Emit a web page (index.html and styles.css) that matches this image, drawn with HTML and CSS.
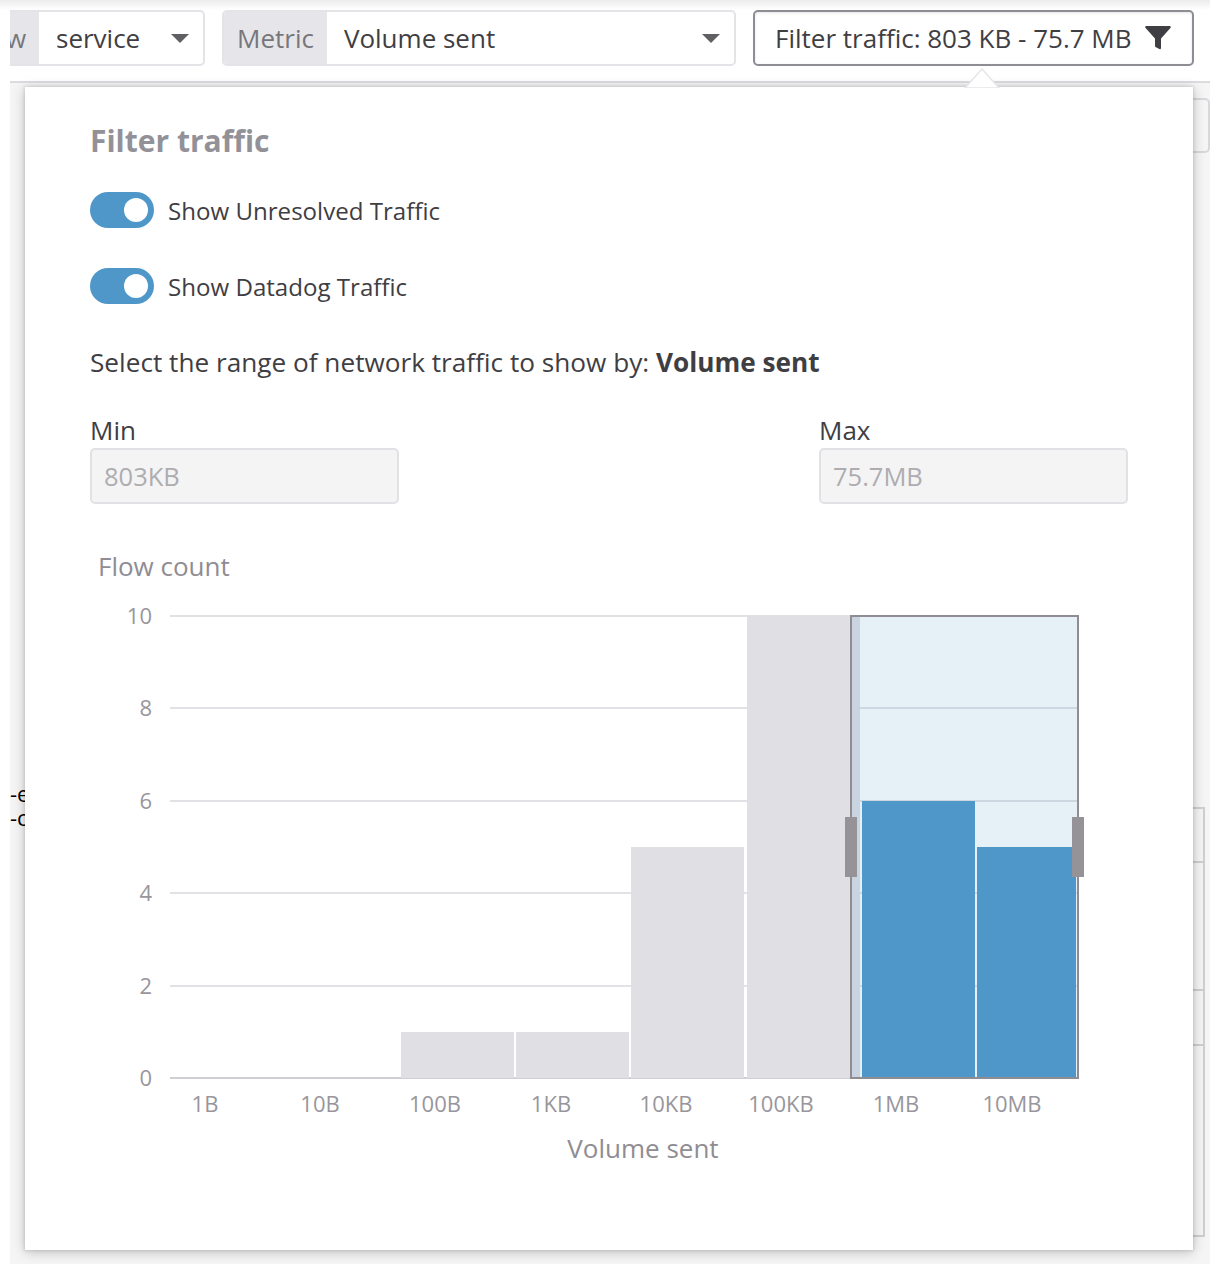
FILE: index.html
```html
<!DOCTYPE html>
<html lang="en">
	<head>
		<meta charset="utf-8">
		<title>Filter traffic</title>
		<link rel="stylesheet" href="styles.css">
	</head>
	<body>
		<div id="page-wrapper">
			<div class="toolbar">
				<div class="field field-groupby">
					<span class="field-label label-cut"><span class="label-cut-text">w</span></span>
					<span class="field-value">service</span>
					<span class="caret"></span>
				</div>
				<div class="field field-metric">
					<span class="field-label">Metric</span>
					<span class="field-value">Volume sent</span>
					<span class="caret"></span>
				</div>
				<div class="filter-button">
					<span>Filter traffic: 803 KB - 75.7 MB</span>
					<svg class="filter-icon" width="26" height="26" viewBox="0 0 26 26">
						<path d="M1.500 1h23c1.200 0 1.600 1.200 .9 2L16 13.500V23c0 .9-.9 1.500-1.700 1.100l-3.800-2.200c-.5-.3-.5-.7-.5-1.200v-7.200L.6 3C-.1 2.200 .3 1 1.500 1z"/>
					</svg>
				</div>
			</div>

			<div class="content">
				<div class="behind-log">
					<div>-e</div>
					<div>-c</div>
				</div>
				<div class="behind-side">
					<div class="side-box"></div>
					<div class="side-table">
						<div class="side-row row-a"></div>
						<div class="side-row row-b"></div>
						<div class="side-row row-c"></div>
						<div class="side-row row-d"></div>
					</div>
				</div>

				<div class="popover">
					<h2 class="popover-title">Filter traffic</h2>
					<div class="toggle-row">
						<span class="toggle"><span class="toggle-knob"></span></span>
						<span>Show Unresolved Traffic</span>
					</div>
					<div class="toggle-row">
						<span class="toggle"><span class="toggle-knob"></span></span>
						<span>Show Datadog Traffic</span>
					</div>
					<p class="range-text">Select the range of network traffic to show by: <b>Volume sent</b></p>
					<div class="range-inputs">
						<div class="range-field">
							<label>Min</label>
							<div class="range-input">803KB</div>
						</div>
						<div class="range-field">
							<label>Max</label>
							<div class="range-input">75.7MB</div>
						</div>
					</div>

					<!-- svg origin is at page x=90, y=540 -->
					<svg class="chart" width="1040" height="640" viewBox="0 0 1040 640">
						<text class="axis-title" x="8" y="36">Flow count</text>

						<g class="grid">
							<line x1="80" x2="988" y1="76" y2="76"/>
							<line x1="80" x2="988" y1="168" y2="168"/>
							<line x1="80" x2="988" y1="261" y2="261"/>
							<line x1="80" x2="988" y1="353" y2="353"/>
							<line x1="80" x2="988" y1="446" y2="446"/>
							<line class="grid-base" x1="80" x2="988" y1="538" y2="538"/>
						</g>

						<g class="ticks-y">
							<text x="62" y="84">10</text>
							<text x="62" y="176">8</text>
							<text x="62" y="269">6</text>
							<text x="62" y="361">4</text>
							<text x="62" y="454">2</text>
							<text x="62" y="546">0</text>
						</g>

						<g class="bars-off">
							<rect x="311" y="492" width="113" height="46"/>
							<rect x="426" y="492" width="113" height="46"/>
							<rect x="541" y="307" width="113" height="231"/>
							<rect x="657" y="76" width="113" height="462"/>
						</g>

						<rect class="selection-fill" x="761" y="76" width="227" height="462"/>
						<g class="bars-on">
							<rect x="772" y="261" width="113" height="277"/>
							<rect x="887" y="307" width="99" height="231"/>
						</g>
						<line class="selection-base" x1="761" x2="988" y1="538" y2="538"/>
						<rect class="selection-border" x="761" y="76" width="227" height="462"/>
						<rect class="handle" x="755" y="277" width="12" height="60"/>
						<rect class="handle" x="982" y="277" width="12" height="60"/>

						<g class="ticks-x">
							<text x="115" y="572">1B</text>
							<text x="230" y="572">10B</text>
							<text x="345" y="572">100B</text>
							<text x="461" y="572">1KB</text>
							<text x="576" y="572">10KB</text>
							<text x="691" y="572">100KB</text>
							<text x="806" y="572">1MB</text>
							<text x="922" y="572">10MB</text>
						</g>
						<text class="axis-title axis-title-x" x="553" y="618">Volume sent</text>
					</svg>
				</div>
				<svg class="popover-notch" width="36" height="20" viewBox="0 0 36 20">
					<polygon points="1,20 18,1 35,20"/>
				</svg>
			</div>
		</div>
	</body>
</html>
```

FILE: styles.css
```css
html, body {
	margin: 0;
	background: #ffffff;
}
body {
	font-family: "Open Sans", "Liberation Sans", sans-serif;
	color: #3f3e43;
	background: linear-gradient(#ececec, #ffffff 10px) no-repeat;
}
#page-wrapper {
	margin-left: 10px;
	height: 1264px;
	padding-top: 10px;
	box-sizing: border-box;
	display: flex;
	flex-direction: column;
	overflow: hidden;
}

/* top bar */
.toolbar {
	display: flex;
	gap: 17px;
	height: 73px;
	flex: none;
	box-sizing: border-box;
	border-bottom: 2px solid #dcdce0;
}
.field {
	display: flex;
	align-items: center;
	height: 56px;
	box-sizing: border-box;
	border: 2px solid #e4e4e8;
	border-radius: 5px;
	font-size: 26px;
	overflow: hidden;
}
.field-groupby {
	width: 195px;
	border-left: 0;
	border-radius: 0 5px 5px 0;
}
.field-metric {
	width: 514px;
}
.field-label {
	display: flex;
	align-items: center;
	height: 100%;
	padding: 0 13px;
	background: #e6e6ea;
	color: #77767b;
	flex: none;
}
.label-cut {
	width: 29px;
	box-sizing: border-box;
	padding: 0;
	overflow: hidden;
}
.label-cut-text {
	margin-left: -4px;
}
.field-value {
	flex: 1;
	padding-left: 17px;
}
.caret {
	width: 0;
	height: 0;
	border-left: 9px solid transparent;
	border-right: 9px solid transparent;
	border-top: 9px solid #605f64;
	margin-right: 14px;
}
.filter-button {
	display: flex;
	align-items: center;
	justify-content: space-between;
	width: 441px;
	height: 56px;
	box-sizing: border-box;
	padding: 0 21px 0 20px;
	border: 2px solid #8f8d93;
	border-radius: 5px;
	box-shadow: inset 0 1px 3px rgba(0, 0, 0, 0.1);
	font-size: 26px;
}
.filter-icon {
	fill: #3f3e43;
	flex: none;
}

/* things under the popover */
.content {
	position: relative;
	flex: 1;
	display: flex;
	justify-content: space-between;
	background: #f5f5f5;
}
.behind-log {
	width: 15px;
	padding-top: 698px;
	overflow: hidden;
	white-space: nowrap;
	font-size: 22px;
	line-height: 24px;
	color: #000000;
}
.behind-side {
	width: 17px;
	padding-top: 15px;
}
.side-box {
	height: 55px;
	box-sizing: border-box;
	border: 2px solid #d8d8dc;
	border-left: 0;
	border-radius: 0 5px 5px 0;
}
.side-table {
	margin-top: 654px;
	width: 10px;
	border: 2px solid #cfcfd2;
	border-left: 0;
}
.side-row {
	border-bottom: 2px solid #cfcfd2;
}
.row-a { height: 52px; }
.row-b { height: 126px; }
.row-c { height: 53px; }
.row-d { height: 189px; border-bottom: 0; }

/* popover */
.popover {
	position: absolute;
	left: 15px;
	top: 4px;
	width: 1168px;
	height: 1163px;
	box-sizing: border-box;
	padding: 34px 0 0 65px;
	background: #ffffff;
	box-shadow: 0 0 3px 1px rgba(0, 0, 0, 0.1), 0 2px 12px rgba(0, 0, 0, 0.22);
}
.popover-notch {
	position: absolute;
	left: 954px;
	top: -15px;
	fill: #ffffff;
	stroke: #e6e6ea;
	stroke-width: 1.5;
}
.popover-title {
	margin: 0 0 31px 0;
	font-size: 30px;
	line-height: 40px;
	font-weight: 700;
	color: #939198;
}
.toggle-row {
	display: flex;
	align-items: center;
	gap: 14px;
	height: 36px;
	margin-bottom: 40px;
	font-size: 24.1px;
}
.toggle {
	display: block;
	width: 64px;
	height: 36px;
	box-sizing: border-box;
	padding: 6px 6px 6px 34px;
	border-radius: 18px;
	background: #5097c9;
}
.toggle-knob {
	display: block;
	width: 24px;
	height: 24px;
	border-radius: 50%;
	background: #ffffff;
}
.range-text {
	margin: 0 0 34px 0;
	padding-top: 1px;
	font-size: 26.2px;
	line-height: 34px;
}
.range-inputs {
	display: flex;
	justify-content: space-between;
	width: 1038px;
}
.range-field label {
	display: block;
	font-size: 26px;
	line-height: 35px;
}
.range-input {
	width: 309px;
	height: 56px;
	box-sizing: border-box;
	padding: 0 12px;
	line-height: 52px;
	font-size: 25.500px;
	color: #aeacb1;
	background: #f4f4f4;
	border: 2px solid #e2e2e6;
	border-radius: 5px;
}

/* chart */
.chart {
	display: block;
	margin-top: 36px;
}
.axis-title {
	font-size: 26px;
	fill: #8f8d93;
}
.axis-title-x {
	text-anchor: middle;
}
.grid line {
	stroke: #e2e2e6;
	stroke-width: 2;
}
.grid .grid-base {
	stroke: #cfcfd4;
}
.ticks-y text, .ticks-x text {
	font-size: 22px;
	fill: #98969c;
}
.ticks-y text {
	text-anchor: end;
}
.ticks-x text {
	text-anchor: middle;
}
.bars-off rect {
	fill: #e0dfe4;
}
.bars-on rect {
	fill: #5097c9;
}
.selection-fill {
	fill: #5097c9;
	fill-opacity: 0.15;
}
.selection-base {
	stroke: #5d7d95;
	stroke-width: 2;
}
.selection-border {
	fill: none;
	stroke: #8f8d93;
	stroke-width: 2;
}
.handle {
	fill: #959298;
}
```
